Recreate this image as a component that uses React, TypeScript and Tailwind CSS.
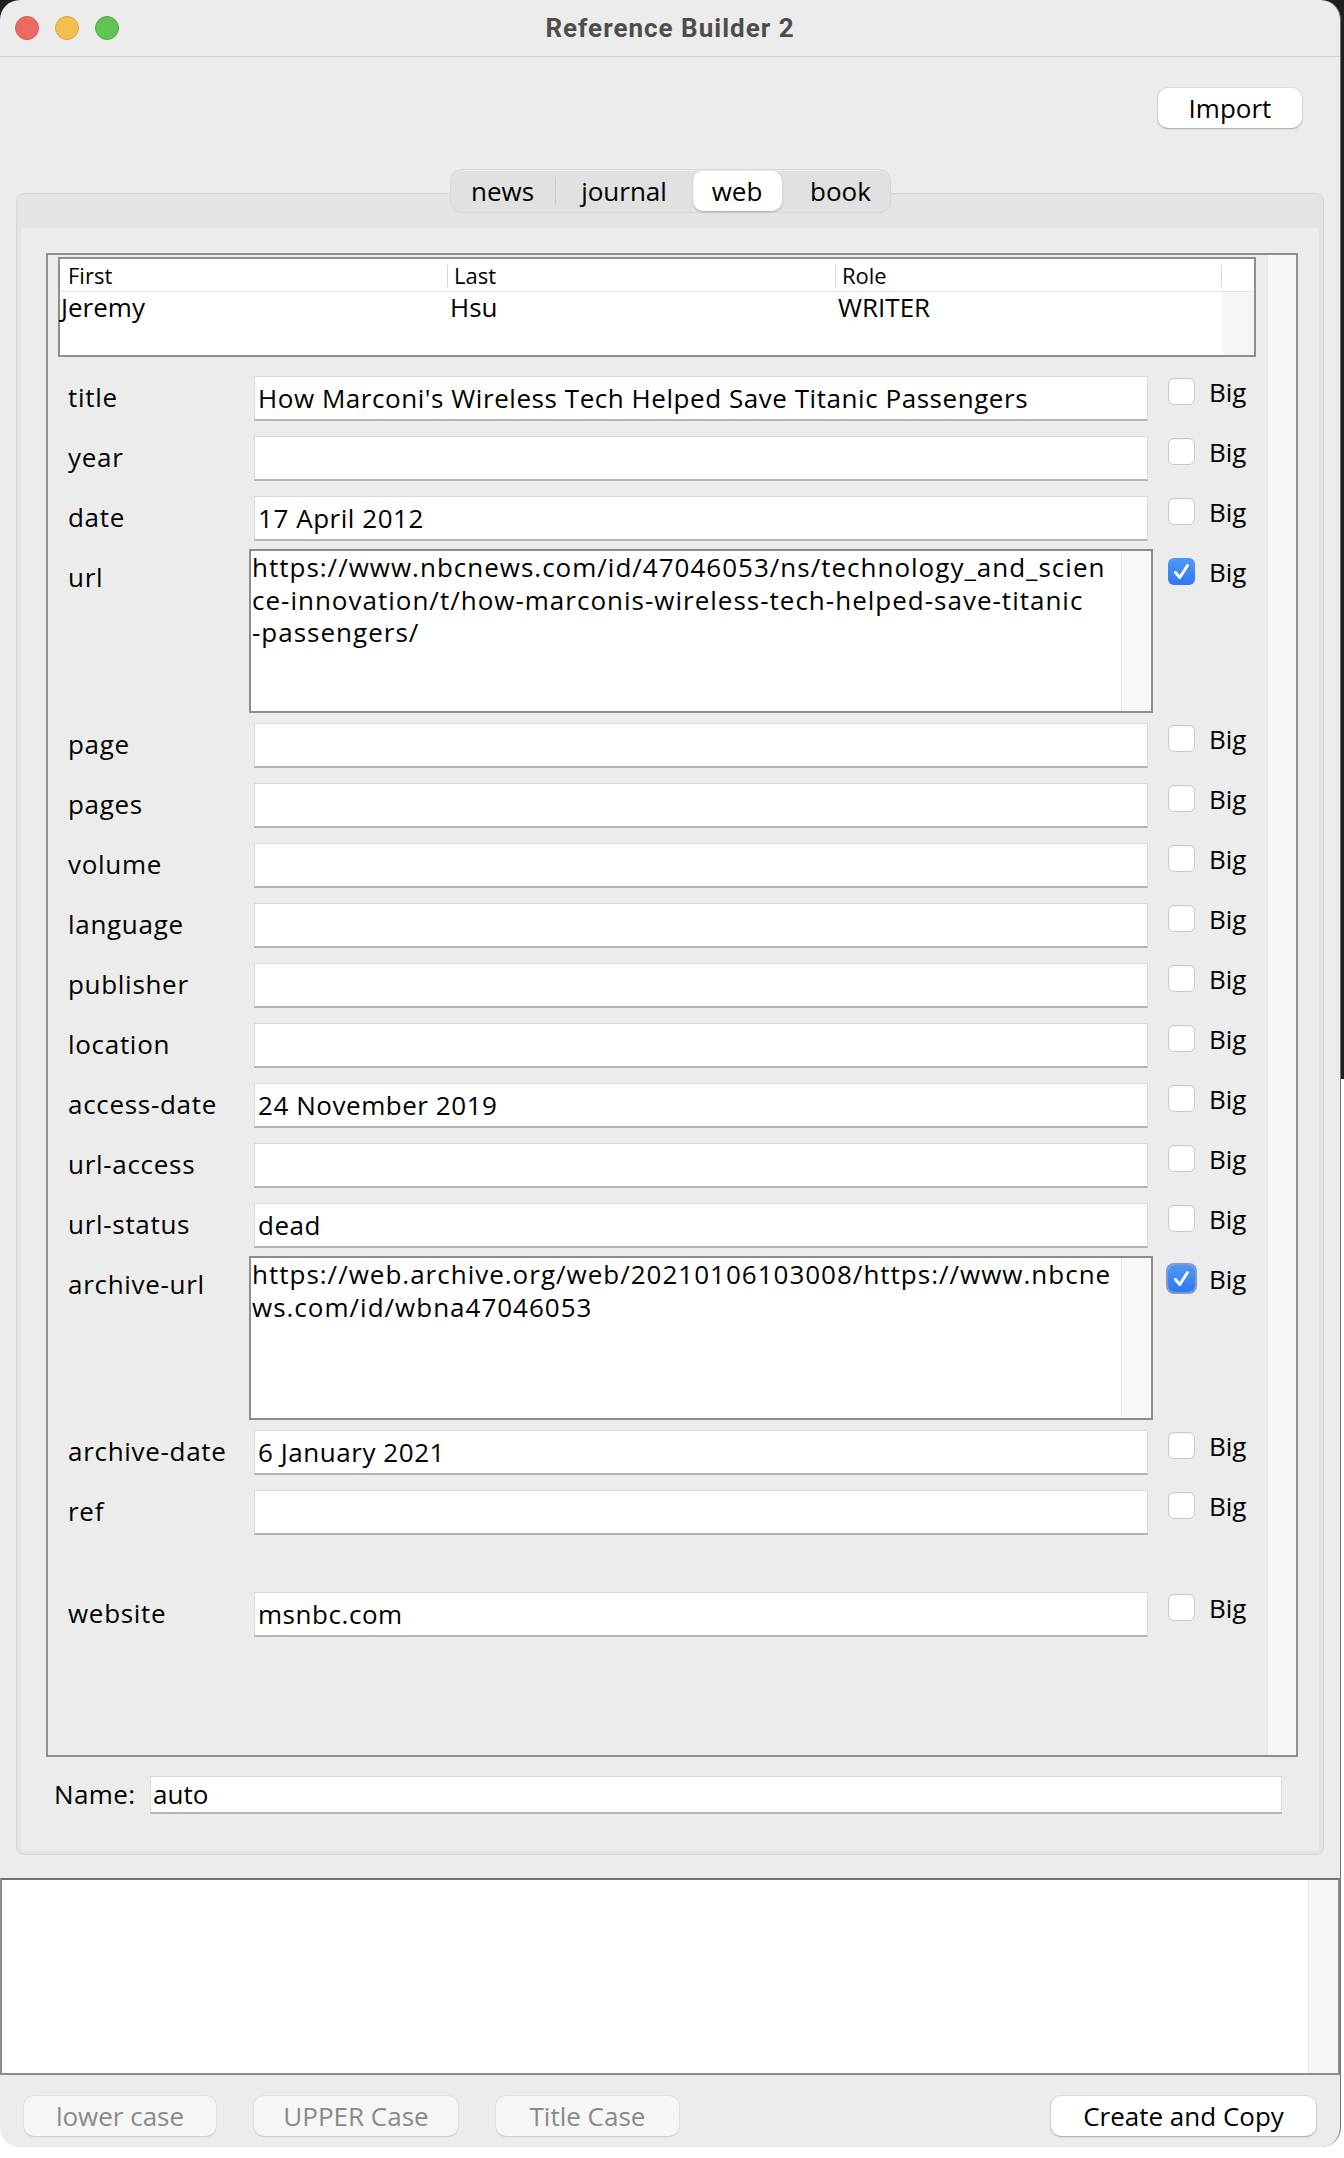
import React from "react";

type Field = {
  label: string;
  value?: string;
  lines?: string[];
  big?: boolean;
  focus?: boolean;
};

// rows of the citation form, top to bottom
const fields: Field[] = [
  { label: "title", value: "How Marconi's Wireless Tech Helped Save Titanic Passengers" },
  { label: "year" },
  { label: "date", value: "17 April 2012" },
  {
    label: "url",
    lines: [
      "https://www.nbcnews.com/id/47046053/ns/technology_and_scien",
      "ce-innovation/t/how-marconis-wireless-tech-helped-save-titanic",
      "-passengers/",
    ],
    big: true,
  },
  { label: "page" },
  { label: "pages" },
  { label: "volume" },
  { label: "language" },
  { label: "publisher" },
  { label: "location" },
  { label: "access-date", value: "24 November 2019" },
  { label: "url-access" },
  { label: "url-status", value: "dead" },
  {
    label: "archive-url",
    lines: [
      "https://web.archive.org/web/20210106103008/https://www.nbcne",
      "ws.com/id/wbna47046053",
    ],
    big: true,
    focus: true,
  },
  { label: "archive-date", value: "6 January 2021" },
  { label: "ref" },
];

function BigCheck({ on, focus }: { on?: boolean; focus?: boolean }) {
  return (
    <div className="pl-[15px] pt-[10px]">
      <div className="h-[27px] flex items-center gap-[14px]">
        {on ? (
          <span
            className={`w-[27px] h-[27px] rounded-[6px] bg-[linear-gradient(to_bottom,#4f97fa,#2f79ef)] flex items-center justify-center ${
              focus ? "ring-2 ring-[#7f9bc8]" : ""
            }`}
          >
            <svg width="27" height="27" viewBox="0 0 27 27">
              <path
                d="M7.5 14.5 L11.8 19.5 L19.5 7.5"
                stroke="white"
                strokeWidth="3"
                fill="none"
                strokeLinecap="round"
                strokeLinejoin="round"
              />
            </svg>
          </span>
        ) : (
          <span className="w-[27px] h-[27px] rounded-[6px] bg-white border border-[#c9c9c9] shadow-[inset_0_1px_1px_rgba(0,0,0,0.04)]" />
        )}
        <span className="leading-[32px]">Big</span>
      </div>
    </div>
  );
}

function FieldRow({ f }: { f: Field }) {
  if (f.lines) {
    return (
      <div className="flex h-[167px]">
        <div className="w-[201px] pl-[20px] pt-[13px] leading-[32px] tracking-[0.7px]">{f.label}</div>
        <div className="w-[904px] pt-[1px]">
          <div className="h-[164px] border-2 border-[#8d8d8d] bg-white flex">
            <div className="flex-1 min-w-0 pl-[1px] leading-[32.5px] tracking-[1px] whitespace-pre">
              {f.lines.map((l) => (
                <div key={l}>{l}</div>
              ))}
            </div>
            <div className="w-[30px] shrink-0 bg-[#f8f8f8] border-l border-[#e8e8e8]" />
          </div>
        </div>
        <BigCheck on={f.big} focus={f.focus} />
      </div>
    );
  }
  return (
    <div className="flex h-[60px]">
      <div className="w-[201px] pl-[20px] pt-[13px] leading-[32px] tracking-[0.7px]">{f.label}</div>
      <div className="w-[904px] px-[5px] pt-[8px]">
        <div className="h-[45px] bg-white border border-[#dadada] border-b-2 border-b-[#b3b3b3] flex items-center pl-[3px] leading-[32px] tracking-[0.55px] whitespace-nowrap overflow-hidden">
          {f.value}
        </div>
      </div>
      <BigCheck on={f.big} />
    </div>
  );
}

function AuthorTable() {
  return (
    <div className="ml-[10px] mr-[11px] mt-[2px] h-[100px] border-2 border-[#8e8e8e] bg-white flex flex-col">
      <div className="h-[33px] grid grid-cols-[387px_388px_386px_1fr] border-b border-[#e4e4e4] text-[22px]">
        <div className="flex items-center pl-[8px]">First</div>
        <div className="flex items-center">
          <span className="w-px h-[22px] bg-[#d8d8d8]" />
          <span className="pl-[6px]">Last</span>
        </div>
        <div className="flex items-center">
          <span className="w-px h-[22px] bg-[#d8d8d8]" />
          <span className="pl-[6px]">Role</span>
        </div>
        <div className="flex items-center">
          <span className="w-px h-[22px] bg-[#d8d8d8]" />
        </div>
      </div>
      <div className="flex-1 flex">
        <div className="flex-1">
          <div className="h-[30px] grid grid-cols-[387px_388px_386px] items-center leading-[30px]">
            <span className="pl-[1px]">Jeremy</span>
            <span className="pl-[3px]">Hsu</span>
            <span className="pl-[3px]">WRITER</span>
          </div>
        </div>
        <div className="w-[32px] bg-[#f5f5f5]" />
      </div>
    </div>
  );
}

function Segments() {
  return (
    <div className="relative z-10 flex justify-center">
      <div className="flex h-[44px] rounded-[12px] bg-[#e1e1e1] border border-[#d6d6d6] shadow-[inset_0_1px_0_rgba(255,255,255,0.4)]">
        <div className="w-[104px] flex items-center justify-center">news</div>
        <span className="w-px h-[28px] self-center bg-[#cbcbcb]" />
        <div className="w-[137px] flex items-center justify-center">journal</div>
        <div className="w-[89px] py-[1px]">
          <div className="h-full rounded-[10px] bg-white shadow-[0_1px_2px_rgba(0,0,0,0.25)] flex items-center justify-center">
            web
          </div>
        </div>
        <div className="w-[108px] pl-[10px] flex items-center justify-center">book</div>
      </div>
    </div>
  );
}

export default function App() {
  return (
    <div className="w-[1344px] h-[2158px] bg-[linear-gradient(to_bottom,#1e1e1e_0%,#1e1e1e_50%,#ffffff_50%)] font-['Open_Sans',sans-serif] text-[26px] text-black">
      <div className="w-[1341px] h-[2147px] bg-[#ececec] rounded-[20px] overflow-hidden flex flex-col border-r border-[#6f6f6f]">
        {/* title bar */}
        <div className="h-[57px] shrink-0 grid grid-cols-[1fr_auto_1fr] items-center border-b border-[#d1d1d1]">
          <div className="flex gap-[16px] pl-[15px]">
            <span className="w-[24px] h-[24px] rounded-full bg-[#ed6a5e] border border-[#d65a4f]" />
            <span className="w-[24px] h-[24px] rounded-full bg-[#f5bf4f] border border-[#d9a53d]" />
            <span className="w-[24px] h-[24px] rounded-full bg-[#61c554] border border-[#4fa945]" />
          </div>
          <div className="font-['Roboto',sans-serif] font-bold text-[26px] tracking-[1px] text-[#4d4d4d]">
            Reference Builder 2
          </div>
          <div />
        </div>

        {/* import */}
        <div className="flex justify-end pr-[38px] pt-[31px]">
          <button className="w-[144px] h-[40px] bg-white rounded-[10px] shadow-[0_0_0_1px_rgba(0,0,0,0.05),0_1px_2px_rgba(0,0,0,0.25)] leading-none">
            Import
          </button>
        </div>

        <div className="mt-[41px]">
          <Segments />
        </div>

        {/* tab panel */}
        <div className="ml-[16px] mr-[16px] -mt-[20px] h-[1662px] rounded-[8px] bg-[#e4e4e4] border border-[#d5d5d5] pt-[34px] px-[4px] pb-[4px]">
          <div className="h-full bg-[#ececec] pt-[25px] pl-[25px] pr-[21px] flex flex-col">
            <div className="h-[1504px] border-2 border-[#8e8e8e] flex">
              <div className="flex-1 flex flex-col">
                <AuthorTable />
                <div className="mt-[11px]">
                  {fields.map((f) => (
                    <FieldRow key={f.label} f={f} />
                  ))}
                  <div className="h-[42px]" />
                  <FieldRow f={{ label: "website", value: "msnbc.com" }} />
                </div>
              </div>
              <div className="w-[29px] bg-[#f7f7f7] border-l border-[#e9e9e9]" />
            </div>

            <div className="mt-[18px] flex items-center pl-[8px] pr-[16px]">
              <span className="w-[96px] tracking-[0.4px]">Name:</span>
              <div className="flex-1 h-[38px] bg-white border border-[#dadada] border-b-2 border-b-[#b3b3b3] flex items-center pl-[2px]">
                auto
              </div>
            </div>
          </div>
        </div>

        {/* output area */}
        <div className="mt-[23px] h-[197px] border-2 border-[#8d8d8d] border-t-[#727272] bg-white flex justify-end">
          <div className="w-[30px] bg-[#f7f7f7] border-l border-[#e8e8e8]" />
        </div>

        {/* case buttons */}
        <div className="mt-[21px] h-[40px] flex px-[24px]">
          <button className="w-[192px] h-[40px] rounded-[10px] bg-[#f6f6f6] text-[#8a8a8a] shadow-[0_0_0_1px_rgba(0,0,0,0.04),0_1px_1px_rgba(0,0,0,0.1)]">
            lower case
          </button>
          <button className="ml-[38px] w-[204px] h-[40px] rounded-[10px] bg-[#f6f6f6] text-[#8a8a8a] shadow-[0_0_0_1px_rgba(0,0,0,0.04),0_1px_1px_rgba(0,0,0,0.1)]">
            UPPER Case
          </button>
          <button className="ml-[38px] w-[183px] h-[40px] rounded-[10px] bg-[#f6f6f6] text-[#8a8a8a] shadow-[0_0_0_1px_rgba(0,0,0,0.04),0_1px_1px_rgba(0,0,0,0.1)]">
            Title Case
          </button>
          <button className="ml-auto w-[265px] h-[40px] rounded-[10px] bg-white shadow-[0_0_0_1px_rgba(0,0,0,0.05),0_1px_2px_rgba(0,0,0,0.25)]">
            Create and Copy
          </button>
        </div>
      </div>
    </div>
  );
}
